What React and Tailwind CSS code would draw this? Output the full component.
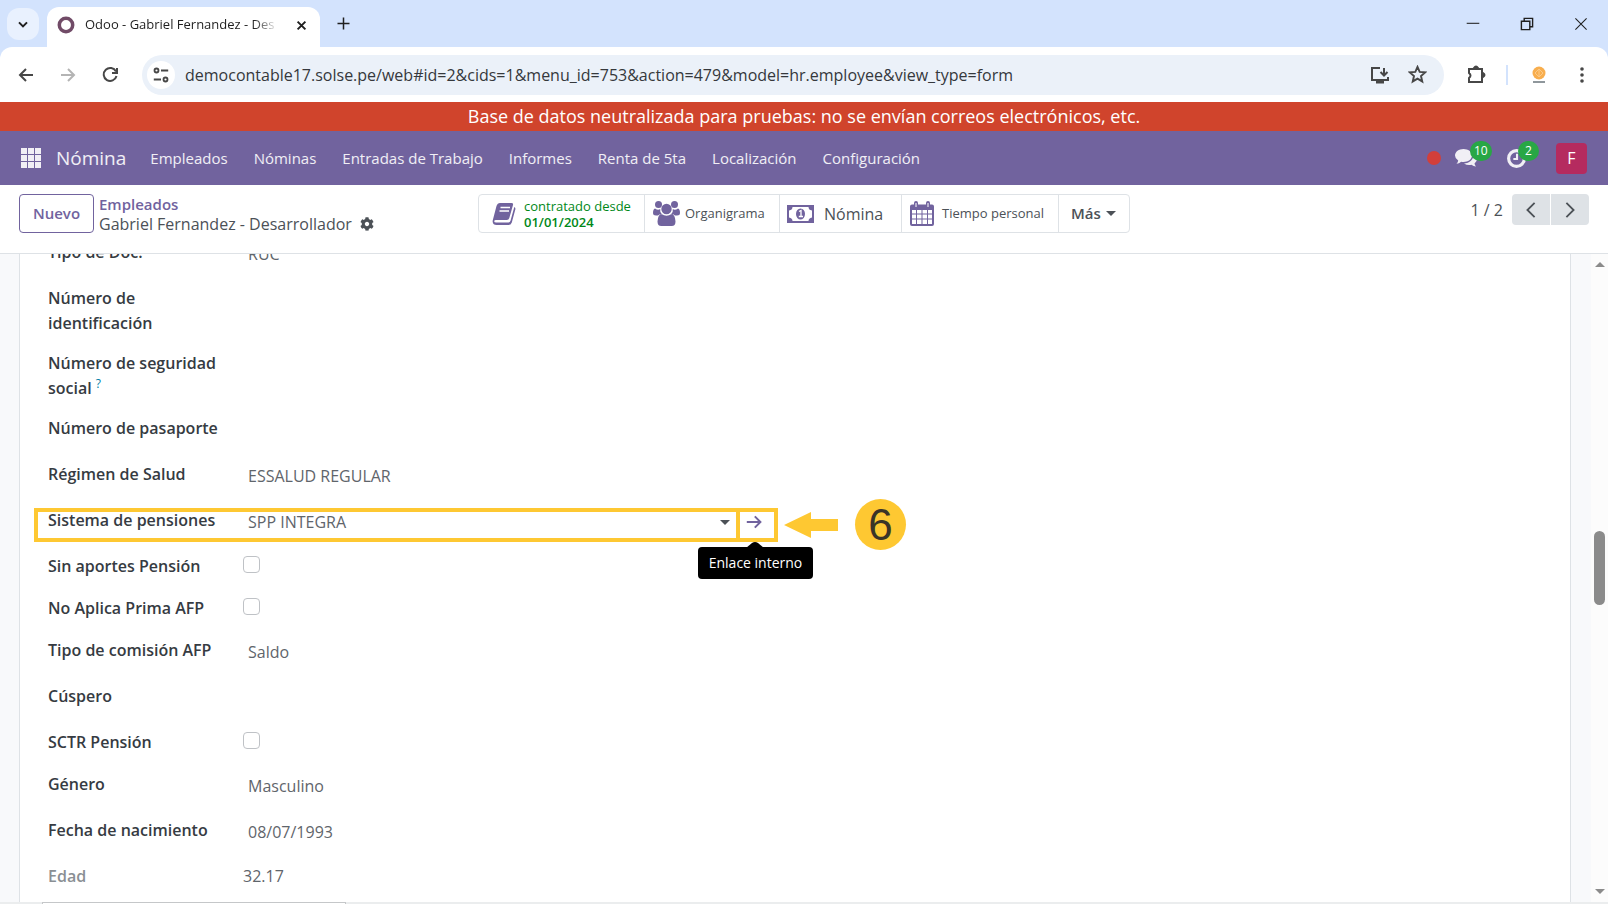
import { useState } from 'react';
import { FaCog } from 'react-icons/fa';

const MENUS = ['Empleados', 'Nóminas', 'Entradas de Trabajo', 'Informes', 'Renta de 5ta', 'Localización', 'Configuración'];

const ROW_HEIGHTS = {
    input: 'h-[46px]',
    double: 'h-[65px]',
    check: 'h-[42px]',
};

const FIELDS = [
    { id: 'doc_type', label: 'Tipo de Doc.', value: 'RUC', kind: 'input' },
    { id: 'ident', label: 'Número de identificación', value: '', kind: 'double' },
    { id: 'ssn', label: 'Número de seguridad social', value: '', kind: 'double', help: true },
    { id: 'passport', label: 'Número de pasaporte', value: '', kind: 'input' },
    { id: 'health', label: 'Régimen de Salud', value: 'ESSALUD REGULAR', kind: 'input' },
    { id: 'pension', label: 'Sistema de pensiones', value: 'SPP INTEGRA', kind: 'input', highlight: true },
    { id: 'no_pension', label: 'Sin aportes Pensión', kind: 'check' },
    { id: 'no_prima', label: 'No Aplica Prima AFP', kind: 'check' },
    { id: 'commission', label: 'Tipo de comisión AFP', value: 'Saldo', kind: 'input' },
    { id: 'cuspp', label: 'Cúspero', value: '', kind: 'input' },
    { id: 'sctr', label: 'SCTR Pensión', kind: 'check' },
    { id: 'gender', label: 'Género', value: 'Masculino', kind: 'input' },
    { id: 'birthday', label: 'Fecha de nacimiento', value: '08/07/1993', kind: 'input' },
];

function Stroke({ size = 20, width = 2, className = '', children }) {
    return (
        <svg width={size} height={size} viewBox="0 0 20 20" fill="none" stroke="currentColor" strokeWidth={width} className={`shrink-0 ${className}`}>
            {children}
        </svg>
    );
}

function Caret({ className = '' }) {
    return (
        <svg width="10" height="5" viewBox="0 0 10 5" fill="currentColor" className={`shrink-0 ${className}`}>
            <path d="M0 0h10L5 5z" />
        </svg>
    );
}

function BookIcon() {
    return (
        <svg width="24" height="24" viewBox="0 0 24 24" className="shrink-0">
            <path fill="#71639e" d="M8 1h11.500q2 0 1.500 2l-3.700 13q-.5 2-2.500 2H4q-1.800 0-1.800 1.300 0 1.200 2 1.200h12.300q1.500 0 2-1.700L22.300 5q1.500.7 1 2.500l-3.500 13q-.8 2.500-3.500 2.500H4.500Q1 23 .7 20q-.2-1.500.4-3L4.500 4Q5.500 1 8 1z" />
            <path stroke="#fff" strokeWidth="1.400" d="M8.500 5.500H18M7.500 9H17" />
        </svg>
    );
}

function UsersIcon() {
    return (
        <svg width="27" height="25" viewBox="0 0 27 25" fill="#71639e" className="shrink-0">
            <circle cx="5.500" cy="3.500" r="3.500" />
            <circle cx="21.500" cy="3.500" r="3.500" />
            <circle cx="13.500" cy="8" r="5.200" />
            <path d="M2 7.500q3 2 5.200.6-.5 3 1.600 5-2.300 0-3.800 1.400H3q-3 0-3-2.500 0-4 2-4.500zM25 7.500q-3 2-5.200.6.5 3-1.600 5 2.300 0 3.800 1.400h2q3 0 3-2.500 0-4-2-4.500zM8.500 13q5 3.500 10 0 3.500 0 4 7.500 0 4.500-3.800 4.500H8.300q-3.800 0-3.800-4.500.5-7.500 4-7.500z" />
        </svg>
    );
}

function MoneyIcon() {
    return (
        <svg width="27" height="18" viewBox="0 0 27 18" className="shrink-0">
            <path fill="#71639e" fillRule="evenodd" d="M0 0h27v18H0zM5.500 2Q5.500 5 2 5.500v7q3.500.5 3.500 3.500h16q0-3 3.500-3.500v-7Q21.500 5 21.500 2z" />
            <ellipse cx="13.500" cy="9" rx="4.500" ry="5.500" fill="#71639e" />
            <path d="M12 6.500l2-1v6m-2.200 0h4.200" stroke="#fff" strokeWidth="1.300" fill="none" />
        </svg>
    );
}

function CalendarIcon() {
    return (
        <svg width="24" height="25" viewBox="0 0 24 25" className="shrink-0">
            <path fill="#71639e" fillRule="evenodd" d="M2 3.500h2V2q0-2 2-2t2 2v1.500h8V2q0-2 2-2t2 2v1.500h2q2 0 2 2V23q0 2-2 2H2q-2 0-2-2V5.500q0-2 2-2zM2 9v3.500h4V9zm5 0v3.500h4.500V9zm5.500 0v3.500H17V9zM18 9v3.500h4V9zM2 13.500v4h4v-4zm5 0v4h4.500v-4zm5.500 0v4H17v-4zm5.500 0v4h4v-4zM2 18.500V23h4v-4.500zm5 0V23h4.500v-4.500zm5.500 0V23H17v-4.500zm5.500 0V23h4v-4.500z" />
            <path stroke="#fff" d="M6 2v4M18 2v4" />
        </svg>
    );
}

function CommentsIcon() {
    return (
        <svg width="22" height="20" viewBox="0 0 22 20" fill="currentColor">
            <path d="M8.500 1C13 1 17 3.800 17 7.500S13 14 8.500 14q-1.200 0-2.300-.3Q4 15.500 1.500 15.700q1.500-1.400 1.700-3.200Q0 10.500 0 7.500C0 3.800 4 1 8.500 1z" />
            <path d="M18.500 6q3.500 2 3.500 5 0 2.700-2.500 4.600.2 1.700 1.500 2.900-2.500 0-4.600-1.700-4 .9-7.400-1.300C14.500 15.300 19 11.500 18.500 6z" />
        </svg>
    );
}

function BrowserTabs() {
    return (
        <div className="flex h-[47px] items-end bg-[#d3e3fd] text-[#1f1f1f]">
            <button aria-label="Buscar pestañas" className="mb-[7px] ml-[7px] flex h-8 w-8 items-center justify-center rounded-xl bg-[#e9f1fe]">
                <Stroke size={16} width={2.5}><path d="M5 8l5 5 5-5" /></Stroke>
            </button>
            <div className="ml-2 flex h-10 w-[273px] items-center rounded-t-xl bg-white px-[10px] pb-1">
                <svg width="18" height="18" viewBox="0 0 18 18" fill="none" className="shrink-0">
                    <circle cx="9" cy="9" r="6.700" stroke="#714b67" strokeWidth="3.500" />
                </svg>
                <span className="ml-[10px] w-[198px] overflow-hidden whitespace-nowrap bg-linear-to-r from-[#1f1f1f] from-85% to-transparent to-98% bg-clip-text text-[13px] text-transparent">
                    Odoo - Gabriel Fernandez - Des
                </span>
                <button aria-label="Cerrar pestaña" className="ml-3">
                    <Stroke size={13} width={3}><path d="M4 4l12 12M16 4L4 16" /></Stroke>
                </button>
            </div>
            <button aria-label="Nueva pestaña" className="mb-4 ml-4">
                <Stroke size={15} width={2}><path d="M10 2v16M2 10h16" /></Stroke>
            </button>
            <div className="mb-4 ml-auto mr-5 flex items-center gap-10">
                <button aria-label="Minimizar"><Stroke size={14} width={1.5}><path d="M1 9h18" /></Stroke></button>
                <button aria-label="Restaurar">
                    <Stroke size={14} width={2}><path d="M2 6h12v12H2zM6 6V2h12v12h-4" /></Stroke>
                </button>
                <button aria-label="Cerrar"><Stroke size={14} width={1.5}><path d="M2 2l16 16M18 2L2 18" /></Stroke></button>
            </div>
        </div>
    );
}

function BrowserToolbar() {
    return (
        <div className="bg-[#d3e3fd]">
            <div className="flex h-[55px] items-center rounded-t-xl bg-white px-4 text-[#474747]">
                <button aria-label="Atrás"><Stroke><path d="M17 10H4M10 4l-6 6 6 6" /></Stroke></button>
                <button aria-label="Adelante" className="ml-[22px] text-[#b4b4b4]"><Stroke><path d="M3 10h13M10 4l6 6-6 6" /></Stroke></button>
                <button aria-label="Recargar" className="ml-[22px]">
                    <Stroke><path d="M16 6.500A6.500 6.500 0 1 0 16.500 11M17 3v5h-5" /></Stroke>
                </button>
                <div className="ml-[22px] flex h-10 flex-1 items-center rounded-full bg-[#ebf1f9] pl-[5px] pr-[17px]">
                    <span className="flex h-7 w-7 items-center justify-center rounded-full bg-white">
                        <Stroke size={18}><path d="M10 5h8M2 15h8" /><circle cx="5" cy="5" r="2.200" /><circle cx="15" cy="15" r="2.200" /></Stroke>
                    </span>
                    <input
                        aria-label="Dirección"
                        readOnly
                        className="ml-[10px] min-w-0 flex-1 bg-transparent text-base text-[#35383c] outline-none"
                        value="democontable17.solse.pe/web#id=2&cids=1&menu_id=753&action=479&model=hr.employee&view_type=form"
                    />
                    <button aria-label="Instalar">
                        <Stroke size={20}><path d="M10 3H2v12h16v-3M14 3v7M10.500 7l3.500 3.500L17.500 7" /><path d="M6 17h8" strokeWidth="3" /></Stroke>
                    </button>
                    <button aria-label="Marcador" className="ml-[18px]">
                        <Stroke size={19}><path d="M10 2l2.300 5.300 5.700.5-4.300 3.800L15 17.300l-5-3-5 3 1.300-5.700L2 7.800l5.700-.5z" /></Stroke>
                    </button>
                </div>
                <button aria-label="Extensiones" className="ml-[22px]">
                    <Stroke><path d="M3 4h13v13H3v-4q3-2.500 0-5z" /><path d="M8 3q2-3 4 0zM17 8q3 2 0 4z" fill="currentColor" /></Stroke>
                </button>
                <span className="ml-5 h-5 w-0.5 bg-[#d3e3fd]" />
                <svg width="18" height="20" viewBox="0 0 18 20" className="ml-[22px]">
                    <circle cx="9" cy="8" r="6.500" fill="#f8ae4e" />
                    <path d="M5 8l4-4 4 4-4 4zM9 4v8" stroke="#fbc987" fill="none" />
                    <path d="M3 17h12" stroke="#8f979c" strokeWidth="2" />
                </svg>
                <button aria-label="Menú" className="ml-[26px] mr-0.5">
                    <svg width="16" height="20" viewBox="0 0 16 20" fill="currentColor">
                        <circle cx="8" cy="4" r="1.800" /><circle cx="8" cy="10" r="1.800" /><circle cx="8" cy="16" r="1.800" />
                    </svg>
                </button>
            </div>
        </div>
    );
}

function Navbar() {
    return (
        <nav className="flex h-[54px] items-center bg-[#71639e] pl-5 pr-[21px] text-[15px] text-white/90">
            <button aria-label="Aplicaciones">
                <svg width="22" height="22" viewBox="0 0 22 22" fill="currentColor">
                    <path d="M1 1h6v6H1zM8 1h6v6H8zM15 1h6v6h-6zM1 8h6v6H1zM8 8h6v6H8zM15 8h6v6h-6zM1 15h6v6H1zM8 15h6v6H8zM15 15h6v6h-6z" />
                </svg>
            </button>
            <a href="#nomina" className="ml-[14px] text-[19px]">Nómina</a>
            <div className="ml-6 flex gap-[26px]">
                {MENUS.map(menu => (
                    <a key={menu} href={`#${menu}`}>{menu}</a>
                ))}
            </div>
            <span className="ml-auto h-[14px] w-[14px] rounded-full bg-[#d23f3a]" />
            <button aria-label="Mensajes" className="relative ml-[14px]">
                <CommentsIcon />
                <span className="absolute -top-[7px] left-[15px] rounded-full bg-[#28a745] px-1 text-xs leading-5 text-white">10</span>
            </button>
            <button aria-label="Actividades" className="relative ml-[29px] mr-px">
                <Stroke size={21} width={3}><circle cx="10" cy="10" r="7.500" /><path d="M10.500 5.500v5H7" strokeWidth="2" /></Stroke>
                <span className="absolute -top-[7px] left-3 rounded-full bg-[#28a745] px-[7px] text-xs leading-5 text-white">2</span>
            </button>
            <button className="ml-[28px] h-[31px] w-[31px] rounded bg-[#b52b5f] text-base text-white">F</button>
        </nav>
    );
}

function ControlPanel() {
    return (
        <div className="flex h-[69px] items-start border-b border-[#dee2e6] bg-white px-[19px] pt-[9px] text-[#4c5157]">
            <div className="flex flex-1 items-start">
                <button className="h-[39px] w-[75px] rounded border border-[#71639e] text-[15px] font-semibold text-[#71639e]">Nuevo</button>
                <div className="ml-[5px] text-base leading-5">
                    <a href="#empleados" className="block text-[15px] font-semibold text-[#71639e]">Empleados</a>
                    <span className="flex items-center gap-2 whitespace-nowrap">
                        Gabriel Fernandez - Desarrollador
                        <button aria-label="Acciones"><FaCog size={14} /></button>
                    </span>
                </div>
            </div>
            <div className="flex h-[39px] divide-x divide-[#dee2e6] rounded border border-[#dee2e6] text-[13px] whitespace-nowrap">
                <button className="flex w-[166px] items-center gap-2 pl-[13px]">
                    <BookIcon />
                    <span className="text-left leading-4 text-[#008818]">
                        contratado desde
                        <span className="block font-semibold">01/01/2024</span>
                    </span>
                </button>
                <button className="flex w-[135px] items-center gap-[5px] pl-2"><UsersIcon />Organigrama</button>
                <button className="flex w-[122px] items-center gap-[10px] pl-[7px] text-base"><MoneyIcon />Nómina</button>
                <button className="flex w-[157px] items-center gap-2 pl-2"><CalendarIcon />Tiempo personal</button>
                <button className="flex w-[70px] items-center gap-[5px] pl-3 text-[15px] font-semibold">Más<Caret /></button>
            </div>
            <div className="flex flex-1 items-start justify-end">
                <span className="mr-[9px] text-base leading-8">1 / 2</span>
                <button aria-label="Anterior" className="flex h-[31px] w-[38px] items-center justify-center rounded-l bg-[#dee2e6]">
                    <Stroke size={18} width={2}><path d="M14 2l-8 8 8 8" /></Stroke>
                </button>
                <button aria-label="Siguiente" className="ml-px flex h-[31px] w-[38px] items-center justify-center rounded-r bg-[#dee2e6]">
                    <Stroke size={18} width={2}><path d="M6 2l8 8-8 8" /></Stroke>
                </button>
            </div>
        </div>
    );
}

function Callout() {
    return (
        <>
            {/* Highlighted boxes round the field and its internal link */}
            <div className="pointer-events-none absolute -left-[14px] top-0 flex h-[34px] w-[744px] border-4 border-[#fec832]">
                <span className="ml-auto w-[38px] border-l-4 border-[#fec832]" />
            </div>
            <svg width="54" height="26" viewBox="0 0 54 26" fill="#fec832" className="absolute left-[736px] top-1">
                <path d="M0 13L27 0v7h27v12H27v7z" />
            </svg>
            <span className="absolute -top-[9px] left-[807px] flex h-[51px] w-[51px] items-center justify-center rounded-full bg-[#fec832] font-['Liberation_Sans',Arial,sans-serif] text-[44px] text-[#3b3428]">
                6
            </span>
            <div role="tooltip" className="absolute left-[650px] top-[39px] z-10 flex h-8 w-[115px] items-center justify-center rounded bg-black text-sm whitespace-nowrap text-white">
                <svg width="18" height="6" viewBox="0 0 18 6" className="absolute -top-[5px] left-12">
                    <path d="M0 6L6 1q3-2 6 0l6 5z" />
                </svg>
                Enlace interno
            </div>
        </>
    );
}

function Field({ field, value, onChange }) {
    return (
        <div className={`relative flex shrink-0 items-start ${ROW_HEIGHTS[field.kind]}`}>
            <label htmlFor={field.id} className="w-[195px] shrink-0 pr-6 text-base leading-[25px] font-semibold text-[#363b42]">
                {field.label}
                {field.help && <sup className="ml-1 text-xs leading-none font-normal text-[#0180a5]">?</sup>}
            </label>
            {field.kind === 'check' ? (
                <input
                    id={field.id}
                    type="checkbox"
                    checked={!!value}
                    onChange={e => onChange(e.target.checked)}
                    className="mt-0.5 h-[17px] w-[17px] appearance-none rounded border border-[#bfc2c6] bg-white checked:bg-[#71639e]"
                />
            ) : (
                <input
                    id={field.id}
                    value={value}
                    onChange={e => onChange(e.target.value)}
                    className="mt-px h-[26px] w-[477px] bg-transparent px-[5px] text-base text-[#5f656b] outline-none"
                />
            )}
            {field.highlight && (
                <>
                    <Caret className="mt-3 text-[#4c5157]" />
                    <button aria-label="Enlace interno" className="mt-[6px] ml-4 text-[#71639e]">
                        <Stroke size={16} width={2.5}><path d="M1 10h16M11 3l7 7-7 7" /></Stroke>
                    </button>
                    <Callout />
                </>
            )}
        </div>
    );
}

export default function App() {
    const [values, setValues] = useState(() => Object.fromEntries(FIELDS.map(f => [f.id, f.value ?? false])));

    return (
        <div className="flex h-screen flex-col overflow-hidden bg-white font-['Open_Sans','Noto_Sans',sans-serif]">
            <BrowserTabs />
            <BrowserToolbar />
            <div className="h-[29px] shrink-0 bg-[#d0442c] text-center text-lg leading-[29px] text-white">
                Base de datos neutralizada para pruebas: no se envían correos electrónicos, etc.
            </div>
            <Navbar />
            <ControlPanel />
            <main className="flex min-h-0 flex-1 bg-[#f8f9fb] pl-[19px]">
                <form className="flex flex-1 flex-col overflow-hidden border-x border-[#dee2e6] bg-white pl-7">
                    <div className="-mt-[14px] flex flex-col">
                        {FIELDS.map(field => (
                            <Field
                                key={field.id}
                                field={field}
                                value={values[field.id]}
                                onChange={v => setValues({ ...values, [field.id]: v })}
                            />
                        ))}
                        <div className="flex h-[38px] text-base leading-[25px]">
                            <span className="w-[195px] font-semibold text-[#8a8f94]">Edad</span>
                            <span className="text-[#5f656b]">32.17</span>
                        </div>
                    </div>
                </form>
                <div className="ml-[20px] flex w-[17px] flex-col items-center bg-[#fcfcfc] py-2 text-[#8b8b8b]">
                    <Caret className="rotate-180" />
                    <span className="mt-[264px] h-[74px] w-[11px] rounded-full bg-[#8b8b8b]" />
                    <Caret className="mt-auto" />
                </div>
            </main>
            <footer className="flex h-0.5 shrink-0 bg-[#ebedee] pl-[42px]">
                <span className="w-[304px] border-x border-t border-[#c5c7c9] bg-white" />
            </footer>
        </div>
    );
}
